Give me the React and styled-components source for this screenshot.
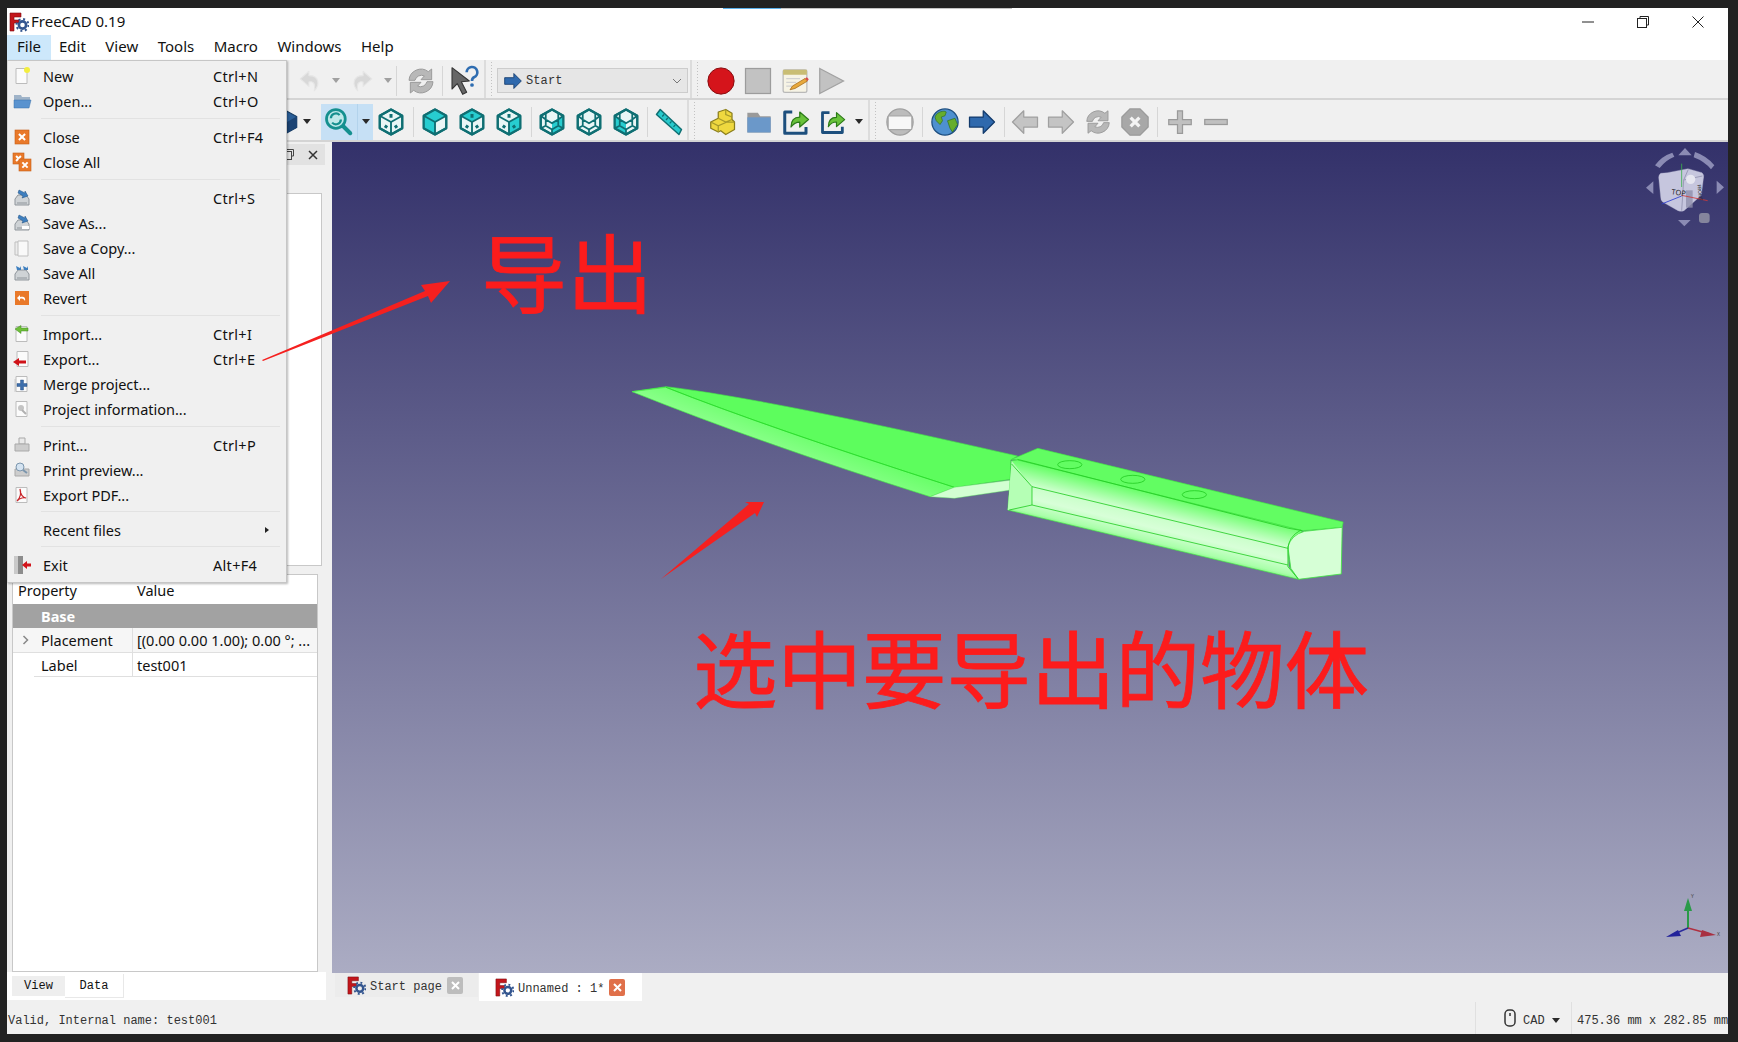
import React from 'react'
import styled, { createGlobalStyle } from 'styled-components'

const UI = '"Noto Sans", "Open Sans", sans-serif'
const MONO = '"Liberation Mono", "DejaVu Sans Mono", monospace'
const CJK = '"Noto Sans CJK SC", "Noto Sans", sans-serif'

const GlobalStyle = createGlobalStyle`
  html, body { margin: 0; padding: 0; background: #222222; }
  * { box-sizing: border-box; }
`

const Page = styled.div`
  width: 1738px;
  height: 1042px;
  padding: 8px 10px 8px 7px;
  background: #222222;
  overflow: hidden;
`

const Window = styled.div`
  position: relative;
  width: 100%;
  height: 100%;
  display: flex;
  flex-direction: column;
  background: #f0f0f0;
  font-family: ${UI};
  color: #111;
`

const TitleBar = styled.div`
  height: 27px;
  flex: none;
  display: flex;
  align-items: center;
  background: #fff;
  padding-left: 2px;
  font-size: 15px;
  gap: 2px;
`

const TitleText = styled.span`
  margin-top: -2px;
`

const TopGlow = styled.div`
  position: absolute;
  top: 0;
  left: 716px;
  width: 289px;
  height: 1px;
  background: #c4c4c4;
  &::before {
    content: '';
    position: absolute;
    left: 0;
    top: 0;
    width: 58px;
    height: 1px;
    background: #5cb2ec;
  }
`

const WinControls = styled.div`
  margin-left: auto;
  display: flex;
  align-items: center;
  margin-right: 24px;
  gap: 43px;
`

const MenuBar = styled.div`
  height: 25px;
  flex: none;
  display: flex;
  background: #fff;
  font-size: 15px;
`

const MenuLabel = styled.div`
  padding: 0 10px;
  line-height: 23px;
  height: 25px;
  background: ${p => (p.$open ? '#cde8fb' : 'transparent')};
  margin-right: -0.5px;
`

const MenuAnchor = styled.div`
  position: relative;
  margin-right: -1.5px;
`

const Dropdown = styled.div`
  position: absolute;
  top: 25px;
  left: 0;
  width: 280px;
  padding: 2px 0 5px;
  background: #f0f0f0;
  border: 1px solid #c6c6c6;
  border-left-color: #dadada;
  box-shadow: 1px 1px 2px rgba(0, 0, 0, 0.28);
  z-index: 5;
`

const MenuRow = styled.div`
  height: 25px;
  display: flex;
  align-items: center;
  position: relative;
  font-size: 14.5px;
  padding-left: 35px;
`

const MenuIcon = styled.span`
  position: absolute;
  left: 4px;
  top: 3px;
  width: 20px;
  height: 20px;
  display: block;
`

const Shortcut = styled.span`
  position: absolute;
  left: 205px;
  letter-spacing: 0.3px;
`

const SubArrow = styled.span`
  position: absolute;
  right: 17px;
  width: 0;
  height: 0;
  border-left: 4px solid #222;
  border-top: 3px solid transparent;
  border-bottom: 3px solid transparent;
`

const MenuSep = styled.div`
  height: 1px;
  margin: ${p => (p.$tight ? '4px 6px 5px 33px' : '5px 6px 5px 33px')};
  background: #e2e2e2;
`

const ToolRow = styled.div`
  height: ${p => p.$h}px;
  flex: none;
  display: flex;
  align-items: center;
  padding-left: ${p => p.$pad}px;
  padding-top: 3px;
  background: #f0f0f0;
  border-bottom: 2px solid #d4d4d4;
`

const Tool = styled.div`
  width: ${p => p.$w || 36}px;
  height: 36px;
  flex: none;
  display: flex;
  align-items: center;
  justify-content: center;
`

const Highlight = styled.div`
  display: flex;
  height: 36px;
  background: #c6e0f5;
  margin-left: 7px;
  & > :last-child { border-left: 1px solid #b3d3ec; }
`

const Caret = styled.span`
  width: 0;
  height: 0;
  border-top: 5px solid ${p => p.$off ? '#a0a0a0' : '#2a2a2a'};
  border-left: 4px solid transparent;
  border-right: 4px solid transparent;
`

const Sep = styled.div`
  width: ${p => p.$w}px;
  height: 30px;
  flex: none;
  display: flex;
  justify-content: ${p => p.$at || 'center'};
  &::before {
    content: '';
    width: 1px;
    height: 100%;
    background: #d6d6d6;
  }
`

const ToolbarBreak = styled.div`
  width: ${p => p.$w}px;
  align-self: stretch;
  flex: none;
  margin: -3px 0 0 ${p => p.$ml || 0}px;
  border-left: 2px solid #dcdcdc;
  background-image: radial-gradient(#c2c2c2 0.6px, transparent 0.7px);
  background-size: 3px 3px;
  background-position: 4px 4px;
  background-repeat: repeat-y;
`

const Combo = styled.div`
  width: 191px;
  height: 25px;
  flex: none;
  display: flex;
  align-items: center;
  padding: 0 5px 0 5px;
  gap: 3px;
  background: #e6e6e6;
  border: 1px solid #cccccc;
  font: 12px ${MONO};
  color: #333;
  letter-spacing: 0.1px;
`

const ComboArrow = styled.svg`
  margin-left: auto;
`

const Main = styled.div`
  flex: 1;
  min-height: 0;
  display: flex;
`

const Dock = styled.div`
  width: 325px;
  flex: none;
  display: flex;
  flex-direction: column;
  background: #f0f0f0;
`

const DockTitle = styled.div`
  height: 21px;
  margin: 2px 7px 0 5px;
  flex: none;
  display: flex;
  align-items: center;
  justify-content: flex-end;
  gap: 14px;
  padding-right: 7px;
  background: #e2e2e2;
  font-size: 13px;
`

const TreeBox = styled.div`
  height: 373px;
  flex: none;
  margin: 28px 10px 0 5px;
  background: #fff;
  border: 1px solid #c8c8c8;
`

const PropBox = styled.div`
  height: 398px;
  flex: none;
  margin: 8px 14px 0 5px;
  background: #fff;
  border: 1px solid #c8c8c8;
  font-size: 14.5px;
`

const PropRow = styled.div`
  display: grid;
  grid-template-columns: ${p => p.$col || 120}px 1fr;
  height: ${p => p.$h || 24}px;
  align-items: center;
  background: ${p => p.$bg || '#fff'};
  color: ${p => p.$bg === '#a2a2a2' ? '#fff' : '#111'};
  font-weight: ${p => p.$bold ? 700 : 400};
  border-bottom: ${p => p.$line ? '1px solid #dfdfdf' : '0'};
  margin-left: ${p => p.$indent || 0}px;
  position: relative;
`

const PropName = styled.div`
  padding-left: ${p => p.$pad}px;
  height: 100%;
  display: flex;
  align-items: center;
  border-right: ${p => p.$line ? '1px solid #dfdfdf' : '0'};
  white-space: nowrap;
`

const PropValue = styled.div`
  padding-left: 4px;
  white-space: nowrap;
  overflow: hidden;
`

const Chevron = styled.svg`
  position: absolute;
  left: 9px;
  top: 7px;
`

const DockTabs = styled.div`
  flex: 1;
  margin: 0 6px 2px 0;
  padding-left: 5px;
  display: flex;
  align-items: flex-start;
  background: #fff;
  font: 12px ${MONO};
`

const DockTab = styled.div`
  width: ${p => p.$w}px;
  height: ${p => (p.$on ? 24 : 20)}px;
  margin-top: ${p => (p.$on ? 2 : 4)}px;
  display: flex;
  align-items: center;
  justify-content: center;
  background: ${p => (p.$on ? '#fff' : '#eeeeee')};
  border-bottom: ${p => (p.$on ? '1px solid #e8e8e8' : '0')};
  border-right: ${p => (p.$on ? '1px solid #e8e8e8' : '0')};
`

const RightCol = styled.div`
  flex: 1;
  min-width: 0;
  display: flex;
  flex-direction: column;
`

const Viewport = styled.div`
  position: relative;
  flex: 1;
  background: linear-gradient(#33316a, #abacc3);
`

const BigNote = styled.div`
  position: absolute;
  left: ${p => p.$x}px;
  top: ${p => p.$y}px;
  font-family: ${CJK};
  font-size: ${p => p.$size}px;
  line-height: 1;
  color: #fc1c1c;
  -webkit-text-stroke: 0.8px #fc1c1c;
  white-space: nowrap;
`

const KnifeSvg = styled.svg`
  position: absolute;
  left: 288px;
  top: 228px;
`

const NavCube = styled.svg`
  position: absolute;
  right: -10px;
  top: 2px;
`

const Axes = styled.svg`
  position: absolute;
  right: 6px;
  bottom: 27px;
`

const DocTabs = styled.div`
  height: 29px;
  flex: none;
  display: flex;
  padding-left: 3px;
  background: #f0f0f0;
  font: 12px ${MONO};
`

const DocTab = styled.div`
  height: ${p => (p.$on ? 28 : 24)}px;
  width: ${p => p.$w}px;
  flex: none;
  display: flex;
  align-items: center;
  padding-left: ${p => p.$pad}px;
  gap: 4px;
  background: ${p => (p.$on ? '#fff' : '#ececec')};
  margin-right: 1px;
  color: #333;
`

const DocTabText = styled.span`
  padding-top: 3px;
`

const CloseBadge = styled.span`
  width: 16px;
  height: 17px;
  display: flex;
  align-items: center;
  justify-content: center;
  background: ${p => (p.$on ? '#e0704a' : '#bdbdbd')};
  border-radius: 2px;
  margin-left: 1px;
`

const StatusBar = styled.div`
  height: 32px;
  flex: none;
  display: flex;
  align-items: center;
  padding-left: 1px;
  font: 12px ${MONO};
  color: #333;
  background: #f0f0f0;
`

const StatusText = styled.span`
  padding-top: 5px;
`

const StatusCell = styled.div`
  display: flex;
  align-items: center;
  height: 100%;
  width: ${p => p.$w}px;
  flex: none;
  margin-left: ${p => (p.$push ? 'auto' : '0')};
  border-left: 1px solid #e0e0e0;
  padding: 5px 0 0 ${p => p.$pad}px;
  gap: 7px;
  white-space: nowrap;
`

const MouseIcon = styled.svg`
  margin-top: -5px;
`

const Overlay = styled.svg`
  position: absolute;
  left: 0;
  top: 0;
  pointer-events: none;
  z-index: 9;
`

/* toolbar drawings */

const FreeCadLogo = ({ size = 20 }) => (
  <svg width={size} height={size} viewBox="0 0 20 20">
    <path d="M1 1h11v4H5v3h5v3H5v8H1z" fill="#c3161c" stroke="#7d0c10" strokeWidth="0.6" />
    <circle cx="13.5" cy="13" r="3.6" fill="none" stroke="#33558f" strokeWidth="2.6" />
    <circle cx="13.5" cy="13" r="6" fill="none" stroke="#33558f" strokeWidth="2" strokeDasharray="2 2.7" />
  </svg>
)

const teal = '#0f6f73'
const cyan = '#27cdd0'

const CubeIcon = ({ top, left, right, wire, iso }) => (
  <svg width="30" height="30" viewBox="0 0 24 24">
    <path d="M12 2l9 5v10l-9 5-9-5V7z" fill="#e9f6f6" stroke={teal} strokeWidth="1.7" strokeLinejoin="round" />
    {top && <path d="M12 2l9 5-9 5-9-5z" fill={cyan} />}
    {left && <path d="M3 7l9 5v10l-9-5z" fill={cyan} />}
    {right && <path d="M21 7l-9 5v10l9-5z" fill={cyan} />}
    {wire ? (
      <path d="M7 5v10l5 3 5-3V5M7 15l-4 2M17 15l4 2M12 18v4M3 7l4 3 5 3 5-3 4-3" fill="none" stroke={teal} strokeWidth="1.4" />
    ) : (
      <path d="M3 7l9 5 9-5M12 12v10" fill="none" stroke={teal} strokeWidth="1.5" />
    )}
    {iso && <path d="M12 5.5v3M7 15l2 1.4M17 15l-2 1.4" stroke={teal} strokeWidth="2.4" fill="none" />}
    <path d="M12 2l9 5v10l-9 5-9-5V7z" fill="none" stroke={teal} strokeWidth="1.7" strokeLinejoin="round" />
  </svg>
)

const ZoomIcon = () => (
  <svg width="30" height="30" viewBox="0 0 24 24">
    <path d="M14 14l7 7" stroke="#15908f" strokeWidth="3.2" strokeLinecap="round" />
    <circle cx="9.5" cy="9.5" r="7.5" fill="#bfe9ea" stroke="#15908f" strokeWidth="2.2" />
    <path d="M5.5 9a4 4 0 0 1 7-2.5M13.5 10a4 4 0 0 1-7 2.5" fill="none" stroke="#15908f" strokeWidth="1.8" />
  </svg>
)

const Ruler = () => (
  <svg width="30" height="30" viewBox="0 0 24 24">
    <path d="M5 2l17 16-2 4L2 6z" fill="#28c9cc" stroke={teal} strokeWidth="1.2" strokeLinejoin="round" />
    <path d="M8 6l-1.4 1.6M11 8.800l-1.400 1.600M14 11.500l-1.400 1.600M17 14.300l-1.400 1.600" stroke={teal} strokeWidth="1" />
  </svg>
)

const CurvedArrow = ({ flip }) => (
  <svg width="26" height="26" viewBox="0 0 24 24">
    <g transform={flip ? 'translate(24 0) scale(-1 1)' : undefined}>
      <path d="M11 3L3 10l8 7v-4c4-1 6 1 5 8 5-5 5-14-5-14z" fill="#d8d8d8" stroke="#e6e6e6" strokeWidth="1" strokeLinejoin="round" />
    </g>
  </svg>
)

const Refresh = ({ size = 32 }) => (
  <svg width={size} height={size} viewBox="0 0 24 24">
    <path d="M3 11.500A9 9 0 0 1 17.500 5L20 3v8h-8l2.500-2.800A5 5 0 0 0 7.500 11.500zM21 12.500A9 9 0 0 1 6.500 19L4 21v-8h8l-2.500 2.800a5 5 0 0 0 7-3.300z" fill="#b8b8b8" stroke="#979797" strokeWidth="0.7" strokeLinejoin="round" />
  </svg>
)

const WhatsThis = () => (
  <svg width="32" height="32" viewBox="0 0 24 24">
    <path d="M3 2l13 10-6 .5 4 8-3 1.500-4-8L3 18z" fill="#666" stroke="#333" strokeWidth="0.8" strokeLinejoin="round" />
    <path d="M14 5.500a4 4 0 1 1 5.500 3.700c-1.400.7-1.500 1.500-1.500 2.800" fill="none" stroke="#2f6db1" strokeWidth="2" />
    <circle cx="18" cy="15" r="1.400" fill="#2f6db1" />
  </svg>
)

const Ball = () => (
  <svg width="30" height="30" viewBox="0 0 24 24">
    <circle cx="12" cy="12" r="10.500" fill="#d5141b" stroke="#8a0d10" strokeWidth="0.8" />
  </svg>
)

const StopSquare = () => (
  <svg width="30" height="30" viewBox="0 0 24 24">
    <rect x="2" y="2" width="20" height="20" fill="#c2c2c2" stroke="#9c9c9c" />
  </svg>
)

const Notes = () => (
  <svg width="30" height="30" viewBox="0 0 24 24">
    <rect x="2.500" y="3" width="19" height="18" rx="1.500" fill="#f6f3e5" stroke="#b9b9b9" />
    <rect x="2.500" y="3" width="19" height="4" fill="#c9bd74" />
    <path d="M5 10h11M5 13h8M5 16h6" stroke="#d1d1d1" />
    <path d="M8 19l2-3 10-6 2 2-10 6z" fill="#e8a93c" stroke="#a66a16" strokeWidth="0.6" />
    <path d="M20 10l2 2 1-1.500-1.500-1.500z" fill="#d94a4a" />
  </svg>
)

const PlayGray = () => (
  <svg width="30" height="30" viewBox="0 0 24 24">
    <path d="M3 2l19 10-19 10z" fill="#c2c2c2" stroke="#a2a2a2" />
  </svg>
)

const BlueArrow = ({ size = 30 }) => (
  <svg width={size} height={size} viewBox="0 0 24 24">
    <path d="M2 8h11V3l9 9-9 9v-5H2z" fill="#2f69ad" stroke="#123a6c" strokeWidth="1" strokeLinejoin="round" />
  </svg>
)

const BlueCube = () => (
  <svg width="28" height="28" viewBox="0 0 24 24">
    <path d="M12 2l9 5v10l-9 5-9-5V7z" fill="#2a5e97" stroke="#173c63" />
    <path d="M12 12l9-5v10l-9 5z" fill="#1b4373" />
  </svg>
)

const Part = () => (
  <svg width="30" height="30" viewBox="0 0 24 24">
    <path d="M3 12l6-3V4l6-2 5 3v5l2 2v6l-7 4-4-3-2 1-6-3z" fill="#efd83f" stroke="#8a7d1c" strokeWidth="1" strokeLinejoin="round" />
    <path d="M9 9l6 3 5-2M15 2v4l5 2M3 12l6 3 7-3M9 15v5M16 12l6 0" fill="none" stroke="#a69a2a" strokeWidth="1" />
  </svg>
)

const Folder = ({ size = 28 }) => (
  <svg width={size} height={size} viewBox="0 0 24 24">
    <path d="M2 4h9l2 3h9v14H2z" fill="#9a9a9a" />
    <path d="M2 8h20v13H2z" fill="#6b98c9" />
  </svg>
)

const LinkArrow = ({ small }) => (
  <svg width={small ? 28 : 30} height={small ? 28 : 30} viewBox="0 0 24 24">
    <path d="M9 4H3v17h17v-5" fill="none" stroke="#1d4f7d" strokeWidth="2.400" strokeLinejoin="round" />
    <path d="M8 16c0-6 3-8 7-8V4l7 6-7 6v-4c-3 0-5 1-7 4z" fill="#69c23a" stroke="#2c7a18" strokeWidth="1" strokeLinejoin="round" />
  </svg>
)

const Cover = () => (
  <svg width="30" height="30" viewBox="0 0 24 24">
    <circle cx="12" cy="12" r="10.500" fill="#bcbcbc" stroke="#a0a0a0" />
    <rect x="2.500" y="7" width="19" height="11" rx="0.800" fill="#f7f7f7" stroke="#a6a6a6" />
  </svg>
)

const Globe = () => (
  <svg width="30" height="30" viewBox="0 0 24 24">
    <circle cx="12" cy="12" r="10.500" fill="#4e90cf" stroke="#1e4f80" />
    <path d="M5 6c3-3 7-3 8-2l-1 3-3 1 1 3-2 3-3-3-1-3zM14 11l6-2 2 5-4 6-2-3z" fill="#66ad2d" stroke="#2d6b15" strokeWidth="0.5" />
  </svg>
)

const NavArrow = ({ flip }) => (
  <svg width="30" height="30" viewBox="0 0 24 24">
    <g transform={flip ? 'translate(24 0) scale(-1 1)' : undefined}>
      <path d="M2 8h11V3l9 9-9 9v-5H2z" fill="#c4c4c4" stroke="#a0a0a0" strokeLinejoin="round" />
    </g>
  </svg>
)

const StopOcta = () => (
  <svg width="30" height="30" viewBox="0 0 24 24">
    <path d="M8 1.500h8l6.500 6.500v8L16 22.500H8L1.500 16V8z" fill="#a8a8a8" stroke="#9a9a9a" />
    <path d="M8.500 8.500l7 7M15.500 8.500l-7 7" stroke="#f4f4f4" strokeWidth="2.600" />
  </svg>
)

const Plus = () => (
  <svg width="30" height="30" viewBox="0 0 24 24">
    <path d="M10 3h4v7h7v4h-7v7h-4v-7H3v-4h7z" fill="#c0c0c0" stroke="#9a9a9a" />
  </svg>
)

const Minus = () => (
  <svg width="30" height="30" viewBox="0 0 24 24">
    <rect x="3" y="10" width="18" height="4" fill="#c0c0c0" stroke="#9a9a9a" />
  </svg>
)

/* menu drawings, one 20x20 glyph per entry */

const Page16 = () => <path d="M4 2.500h11v15H4z" fill="#fbfbfb" stroke="#bcbcbc" />
const Drive = () => (
  <>
    <path d="M3 11l3-4h8l3 4v6H3z" fill="#cfd3d6" stroke="#8f959b" />
    <path d="M5 15h10" stroke="#8f959b" />
  </>
)
const Down = () => <path d="M7 2l6 3v-2l3 5-6 2 1-2-5-3z" fill="#3e7fbf" stroke="#1d4f80" strokeWidth="0.5" />
const OrangeX = ({ x = 3, y = 3, s = 14 }) => (
  <>
    <rect x={x} y={y} width={s} height={s} fill="#e9792a" stroke="#c75e17" strokeWidth="0.6" />
    <path d={`M${x + s * 0.28} ${y + s * 0.28}l${s * 0.44} ${s * 0.44}m0 -${s * 0.44}l-${s * 0.44} ${s * 0.44}`} stroke="#fff" strokeWidth="2" />
  </>
)

const glyphs = {
  New: (<><Page16 /><circle cx="15" cy="4" r="3" fill="#f3ee3f" /></>),
  Open: (<><path d="M2 4h7l1 2h8v4H2z" fill="#9fb3c8" /><path d="M2 9h17l-2 8H2z" fill="#5a93cf" stroke="#3a70a8" strokeWidth="0.5" /></>),
  Close: <OrangeX />,
  CloseAll: (<><OrangeX x={1} y={1} s={11} /><OrangeX x={7} y={7} s={12} /></>),
  Save: (<><Drive /><Down /></>),
  SaveAs: (<><Drive /><Down /><rect x="10" y="13" width="7" height="3" fill="#fff" /></>),
  Copy: (<><path d="M3 4h9v13H3z" fill="#ececec" stroke="#bfbfbf" /><path d="M6 3h10v15H6z" fill="#f9f9f9" stroke="#bfbfbf" /></>),
  SaveAll: (<><Drive /><path d="M4 3l4 2 1-2v4H5zM11 3l4 2 1-2v4h-4z" fill="#3e7fbf" /></>),
  Revert: (<><rect x="3" y="3" width="14" height="14" fill="#e9792a" /><path d="M13 13c1-4-2-5-5-4V7L5 10l3 3v-2c2-1 4 0 5 2z" fill="#fff" /></>),
  Import: (<><Page16 /><path d="M3 5l6-3.500V4h7v3H9v2.500z" fill="#6fbf3a" stroke="#3f8a1c" strokeWidth="0.5" /></>),
  Export: (<><path d="M5 2.500h11v15H5z" fill="#fbfbfb" stroke="#bcbcbc" /><path d="M1 13l6-4v2.500h7v3H7V17z" fill="#cf1218" /></>),
  Merge: (<><path d="M2 5h9v13H2z" fill="#dedede" /><Page16 /><path d="M8.500 6h3v3.500H15v3h-3.500V16h-3v-3.500H5v-3h3.500z" fill="#3d6eab" stroke="#1d4478" strokeWidth="0.4" /></>),
  Info: (<><Page16 /><circle cx="9" cy="9" r="3" fill="#c4c4c4" /><path d="M10 11l4 4" stroke="#b0b0b0" strokeWidth="2" /></>),
  Print: (<><path d="M7 3h6v6H7z" fill="#e9e9e9" stroke="#a9a9a9" /><path d="M3 9h14v7H3z" fill="#cdcdcd" stroke="#a9a9a9" /></>),
  Preview: (<><path d="M3 9h14v7H3z" fill="#cdcdcd" stroke="#a9a9a9" /><circle cx="8" cy="7" r="4" fill="#d4e3f1" stroke="#7c96ad" /><path d="M11 10l4 3" stroke="#7c96ad" strokeWidth="2" /></>),
  Pdf: (<><Page16 /><path d="M8 4c2 6-1 10-3 12 3-3 7-4 9-3-3 0-6-4-6-9z" fill="none" stroke="#c8252a" strokeWidth="1.200" /></>),
  Exit: (<><path d="M2 1h9v18H2z" fill="#8c8c8c" /><path d="M2 1h4v18H2z" fill="#c9c9c9" /><path d="M10 10l5-4v2.500h4v3h-4V14z" fill="#d2141b" /></>),
}

const MenuGlyph = ({ name }) => (
  <MenuIcon>
    <svg width="20" height="20" viewBox="0 0 20 20">{glyphs[name]}</svg>
  </MenuIcon>
)

const fileMenu = [
  [['New', 'New', 'Ctrl+N'], ['Open...', 'Open', 'Ctrl+O']],
  [['Close', 'Close', 'Ctrl+F4'], ['Close All', 'CloseAll']],
  [['Save', 'Save', 'Ctrl+S'], ['Save As...', 'SaveAs'], ['Save a Copy...', 'Copy'], ['Save All', 'SaveAll'], ['Revert', 'Revert']],
  [['Import...', 'Import', 'Ctrl+I'], ['Export...', 'Export', 'Ctrl+E'], ['Merge project...', 'Merge'], ['Project information...', 'Info']],
  [['Print...', 'Print', 'Ctrl+P'], ['Print preview...', 'Preview'], ['Export PDF...', 'Pdf']],
  [['Recent files', null, null, true]],
  [['Exit', 'Exit', 'Alt+F4']],
]

const FileMenu = () => (
  <Dropdown>
    {fileMenu.map((group, i) => (
      <React.Fragment key={i}>
        {i > 0 && <MenuSep $tight={i > 4} />}
        {group.map(([label, icon, keys, sub]) => (
          <MenuRow key={label}>
            {icon && <MenuGlyph name={icon} />}
            {label}
            {keys && <Shortcut>{keys}</Shortcut>}
            {sub && <SubArrow />}
          </MenuRow>
        ))}
      </React.Fragment>
    ))}
  </Dropdown>
)

const Knife = () => (
  <KnifeSvg width="760" height="220" viewBox="0 0 1568 660" preserveAspectRatio="none">
    <defs>
      <linearGradient id="handleSide" gradientUnits="userSpaceOnUse" x1="1130" y1="383" x2="1078" y2="533">
        <stop offset="0" stopColor="#6cff6c" />
        <stop offset="0.35" stopColor="#c8ffc8" />
        <stop offset="0.6" stopColor="#d8ffd8" />
        <stop offset="0.85" stopColor="#aaffaa" />
        <stop offset="1" stopColor="#55f055" />
      </linearGradient>
      <linearGradient id="bevel" gradientUnits="userSpaceOnUse" x1="400" y1="200" x2="360" y2="270">
        <stop offset="0" stopColor="#6cff6c" />
        <stop offset="1" stopColor="#8eff8e" />
      </linearGradient>
    </defs>
    <g strokeLinejoin="round">
      <path d="M25 65L95 50Q300 85 820 258L806 270 805 328 690 352Q300 170 95 52z" fill="#5dfd5d" stroke="#43ee43" strokeWidth="1.500" />
      <path d="M25 65L95 52Q300 170 690 352L640 380Q300 225 25 65z" fill="url(#bevel)" stroke="#44ec44" strokeWidth="1.500" />
      <path d="M95 52Q300 170 690 352" fill="none" stroke="#26dc26" strokeWidth="2" />
      <path d="M640 380L690 352 808 330 806 360 690 385z" fill="#d2ffd2" stroke="#5cf05c" strokeWidth="1" />
      <path d="M808 268L862 235 1492 456 1490 472 1408 482 820 270z" fill="#62fd62" stroke="#3fe83f" strokeWidth="1.500" />
      <path d="M808 272L820 270 1408 482 1378 530 1380 590 1400 628 800 420z" fill="url(#handleSide)" stroke="#3fe83f" strokeWidth="1.500" />
      <path d="M808 272L850 350 850 405 800 420z" fill="#b5ffb5" />
      <path d="M1412 484L1490 472 1488 612 1400 628 1384 595 1378 530Q1385 495 1412 484z" fill="#d6ffd6" stroke="#3fe83f" strokeWidth="2" />
      <path d="M820 268L1380 475 1408 482M850 350L1378 535M850 405L1378 585M850 350V405M803 420L850 405M808 282L850 350M1405 480Q1378 500 1378 540V590L1400 628" fill="none" stroke="#22cc22" strokeWidth="2" />
      <ellipse cx="928" cy="284" rx="25" ry="12" fill="none" stroke="#22cc22" strokeWidth="2" />
      <ellipse cx="1058" cy="328" rx="25" ry="12" fill="none" stroke="#22cc22" strokeWidth="2" />
      <ellipse cx="1185" cy="374" rx="25" ry="12" fill="none" stroke="#22cc22" strokeWidth="2" />
    </g>
  </KnifeSvg>
)

const NavCubeDrawing = () => (
  <NavCube width="118" height="98" viewBox="0 36 354 294">
    <g fill="#8b8bb4">
      <path d="M175 70l20-22 20 22z" />
      <path d="M100 148v38l-22-19zM290 146v40l22-20zM174 264h38l-19 19z" />
      <path d="M105 100q20-28 52-38l6 12q-26 10-44 34zM225 60q36 12 58 40l-10 12q-20-24-52-36z" />
    </g>
    <rect x="237" y="243" width="32" height="30" rx="9" fill="#85859d" />
    <path d="M142 122l62-12 42 12q8 6 4 20l-6 48-52 46q-8 4-18 0l-46-26q-6-4-6-14l-6-60q0-8 6-12z" fill="#c6c6de" stroke="#b0b0cc" />
    <path d="M205 112l-14 32 56-12M191 144l-6 92" fill="none" stroke="#9b9bb8" strokeWidth="3" />
    <path d="M198 175h20v52h-20z" fill="#8f8fab" opacity="0.8" />
    <circle cx="212" cy="142" r="14" fill="#e6e6f0" />
    <path d="M185 95v70" stroke="#39b24a" strokeWidth="3" opacity="0.8" />
    <path d="M185 192l-60 24" stroke="#2a3bd0" strokeWidth="2.500" />
    <path d="M185 190l78 16" stroke="#cf3a3a" strokeWidth="2.500" />
    <text x="155" y="188" fontFamily={UI} fontSize="22" fill="#222" transform="rotate(8 165 180)">TOP</text>
    <text x="0" y="0" fontFamily={UI} fontSize="15" fill="#222" transform="translate(232 158) rotate(84)">FRONT</text>
  </NavCube>
)

const AxesDrawing = () => (
  <Axes width="62" height="58" viewBox="0 0 62 58">
    <path d="M28 40V20" stroke="#2a9a48" strokeWidth="2" />
    <path d="M28 10l4 13h-8z" fill="#2a9a48" />
    <path d="M28 40l22 6" stroke="#b03040" strokeWidth="1.500" />
    <path d="M56 47l-16 2 2-7z" fill="#a83042" />
    <path d="M28 40L12 47" stroke="#2a2a9c" strokeWidth="1.500" />
    <path d="M6 49l12-7 3 6z" fill="#23239a" />
    <text x="31" y="10" fontSize="5" fontFamily={UI} fill="#444">Y</text>
    <text x="57" y="48" fontSize="5" fontFamily={UI} fill="#444">X</text>
  </Axes>
)

const WinMin = () => (
  <svg width="12" height="12" viewBox="0 0 12 12"><path d="M0 6h12" stroke="#222" /></svg>
)
const WinRestore = () => (
  <svg width="12" height="12" viewBox="0 0 12 12" fill="none" stroke="#222">
    <path d="M3 2.500V.5h8.500V9H9.500" /><rect x="0.500" y="2.500" width="9" height="9" fill="#fff" />
  </svg>
)
const WinClose = () => (
  <svg width="12" height="12" viewBox="0 0 12 12"><path d="M.5.5l11 11M11.500.5l-11 11" stroke="#222" /></svg>
)

const SmallX = () => (
  <svg width="9" height="9" viewBox="0 0 9 9"><path d="M1 1l7 7M8 1L1 8" stroke="#fff" strokeWidth="2" /></svg>
)

const Toolbar1 = () => (
  <ToolRow $h={40} $pad={285}>
    <Tool><CurvedArrow /></Tool>
    <Tool $w={16}><Caret $off /></Tool>
    <Tool><CurvedArrow flip /></Tool>
    <Tool $w={16}><Caret $off /></Tool>
    <Sep $w={6} $at="flex-start" />
    <Tool $w={38}><Refresh /></Tool>
    <Sep $w={5} />
    <Tool $w={38}><WhatsThis /></Tool>
    <ToolbarBreak $w={13} $ml={1} />
    <Combo>
      <BlueArrow size={20} />
      Start
      <ComboArrow width="10" height="6" viewBox="0 0 10 6">
        <path d="M1 1l4 4 4-4" fill="none" stroke="#777" />
      </ComboArrow>
    </Combo>
    <ToolbarBreak $w={13} $ml={2} />
    <Tool><Ball /></Tool>
    <Tool $w={37}><StopSquare /></Tool>
    <Tool $w={37}><Notes /></Tool>
    <Tool><PlayGray /></Tool>
  </ToolRow>
)

const Toolbar2 = () => (
  <ToolRow $h={42} $pad={267}>
    <Tool $w={26}><BlueCube /></Tool>
    <Tool $w={14}><Caret /></Tool>
    <Highlight>
      <Tool><ZoomIcon /></Tool>
      <Tool $w={16}><Caret /></Tool>
    </Highlight>
    <Tool><CubeIcon iso /></Tool>
    <Sep $w={8} />
    <Tool><CubeIcon left top /></Tool>
    <Tool $w={37}><CubeIcon top iso /></Tool>
    <Tool $w={38}><CubeIcon right iso /></Tool>
    <Sep $w={6} />
    <Tool><CubeIcon wire right /></Tool>
    <Tool $w={38}><CubeIcon wire /></Tool>
    <Tool><CubeIcon wire left /></Tool>
    <Sep $w={7} />
    <Tool><Ruler /></Tool>
    <ToolbarBreak $w={17} />
    <Tool><Part /></Tool>
    <Tool $w={37}><Folder /></Tool>
    <Tool $w={38}><LinkArrow /></Tool>
    <Tool $w={35}><LinkArrow small /></Tool>
    <Tool $w={18}><Caret /></Tool>
    <ToolbarBreak $w={14} />
    <Tool><Cover /></Tool>
    <Sep $w={9} />
    <Tool><Globe /></Tool>
    <Tool $w={38}><BlueArrow /></Tool>
    <Sep $w={6} />
    <Tool><NavArrow flip /></Tool>
    <Tool><NavArrow /></Tool>
    <Tool $w={37}><Refresh size={30} /></Tool>
    <Tool $w={37}><StopOcta /></Tool>
    <Sep $w={9} />
    <Tool><Plus /></Tool>
    <Tool><Minus /></Tool>
  </ToolRow>
)

const LeftDock = () => (
  <Dock>
    <DockTitle>
      <svg width="11" height="11" viewBox="0 0 11 11" fill="none" stroke="#444">
        <path d="M3 2.500V.5h7.500V7H8.500" /><rect x="0.500" y="2.500" width="8" height="8" />
      </svg>
      <svg width="10" height="10" viewBox="0 0 10 10"><path d="M1 1l8 8M9 1L1 9" stroke="#333" strokeWidth="1.500" /></svg>
    </DockTitle>
    <TreeBox />
    <PropBox>
      <PropRow $h={29}>
        <PropName $pad={5}>Property</PropName>
        <PropValue>Value</PropValue>
      </PropRow>
      <PropRow $h={24} $bg="#a2a2a2" $bold>
        <PropName $pad={28}>Base</PropName>
      </PropRow>
      <PropRow $bg="#f6f6f6" $line $h={25}>
        <Chevron width="8" height="10" viewBox="0 0 8 10"><path d="M1.500 1l4 4-4 4" fill="none" stroke="#888" strokeWidth="1.500" /></Chevron>
        <PropName $pad={28} $line>Placement</PropName>
        <PropValue>[(0.00 0.00 1.00); 0.00 °; ...</PropValue>
      </PropRow>
      <PropRow $line $h={24} $indent={21} $col={99}>
        <PropName $pad={7} $line>Label</PropName>
        <PropValue>test001</PropValue>
      </PropRow>
    </PropBox>
    <DockTabs>
      <DockTab $w={53}>View</DockTab>
      <DockTab $w={59} $on>Data</DockTab>
    </DockTabs>
  </Dock>
)

export default function App() {
  return (
    <Page>
      <GlobalStyle />
      <Window>
        <TopGlow />
        <TitleBar>
          <FreeCadLogo />
          <TitleText>FreeCAD 0.19</TitleText>
          <WinControls>
            <WinMin />
            <WinRestore />
            <WinClose />
          </WinControls>
        </TitleBar>
        <MenuBar>
          <MenuAnchor>
            <MenuLabel $open>File</MenuLabel>
            <FileMenu />
          </MenuAnchor>
          {['Edit', 'View', 'Tools', 'Macro', 'Windows', 'Help'].map(m => (
            <MenuLabel key={m}>{m}</MenuLabel>
          ))}
        </MenuBar>
        <Toolbar1 />
        <Toolbar2 />
        <Main>
          <LeftDock />
          <RightCol>
            <Viewport>
              <BigNote $x={149} $y={85} $size={86}>导出</BigNote>
              <BigNote $x={361} $y={481} $size={84.5}>选中要导出的物体</BigNote>
              <Knife />
              <NavCubeDrawing />
              <AxesDrawing />
            </Viewport>
            <DocTabs>
              <DocTab $w={143} $pad={12}>
                <FreeCadLogo size={19} />
                <DocTabText>Start page</DocTabText>
                <CloseBadge><SmallX /></CloseBadge>
              </DocTab>
              <DocTab $w={163} $pad={16} $on>
                <FreeCadLogo size={19} />
                <DocTabText>Unnamed : 1*</DocTabText>
                <CloseBadge $on><SmallX /></CloseBadge>
              </DocTab>
            </DocTabs>
          </RightCol>
        </Main>
        <StatusBar>
          <StatusText>Valid, Internal name: test001</StatusText>
          <StatusCell $w={96} $pad={28} $push>
            <MouseIcon width="12" height="18" viewBox="0 0 12 18" fill="none" stroke="#333" strokeWidth="1.500">
              <rect x="1" y="1" width="10" height="16" rx="4" /><path d="M6 4v3" />
            </MouseIcon>
            CAD
            <Caret />
          </StatusCell>
          <StatusCell $w={157} $pad={5}>475.36 mm x 282.85 mm</StatusCell>
        </StatusBar>
        <Overlay width="1721" height="1026" viewBox="7 8 1721 1026">
          <path d="M262 360L425 291 421 285 450 281 431 303 428 296 263 361z" fill="#f5201f" />
          <path d="M661 579L749 504 745 502 764 502 757 517 755 513z" fill="#f5201f" />
        </Overlay>
      </Window>
    </Page>
  )
}
